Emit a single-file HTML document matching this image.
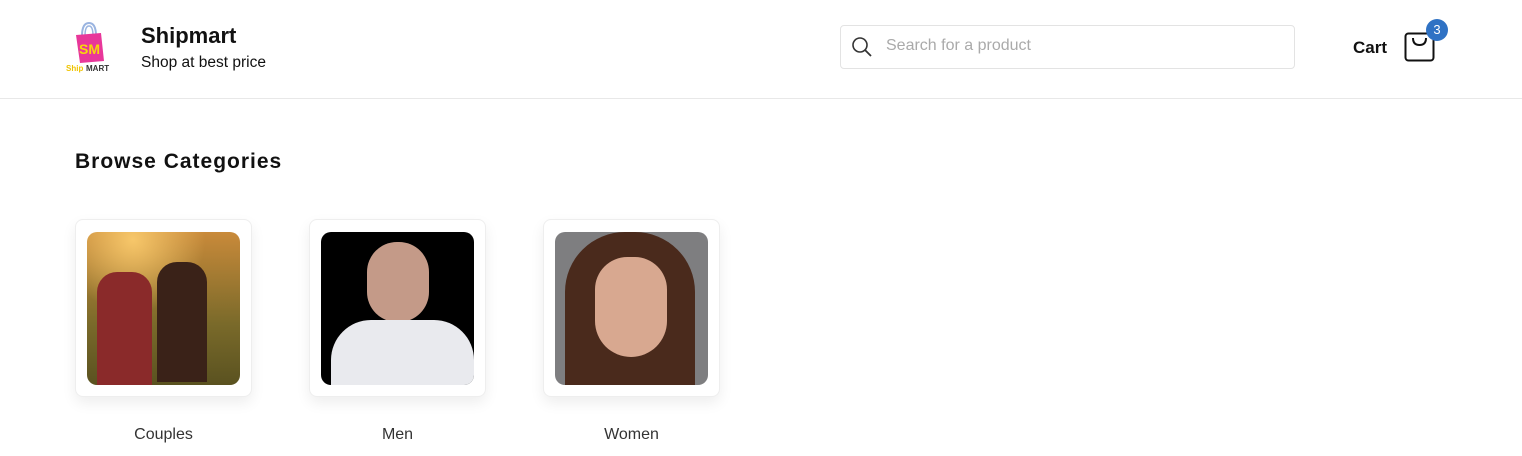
<!DOCTYPE html>
<html><head><style>
*{box-sizing:border-box;margin:0;padding:0}
body{width:1522px;height:456px;background:#fff;font-family:"Liberation Sans",Arial,sans-serif;position:relative;overflow:hidden;color:#111}
.hdr{position:absolute;left:0;top:0;width:1522px;height:99px;border-bottom:1px solid #e8e8e8}
.abs{position:absolute}
.card{position:absolute;top:219px;width:177px;height:178px;border:1px solid #eee;border-radius:8px;background:#fff;box-shadow:0 6px 14px rgba(0,0,0,0.07)}
.img{position:absolute;left:11px;top:12px;width:153px;height:153px;border-radius:10px;overflow:hidden}
.lbl{position:absolute;top:426px;width:177px;text-align:center;font-size:16px;color:#333}
</style></head><body>
<div class="hdr">
 <svg class="abs" style="left:64px;top:20px" width="50" height="54" viewBox="0 0 50 54">
  <path d="M18 16 Q18 3 25 3 Q32 3 32 16" fill="none" stroke="#9ab4e0" stroke-width="2"/>
  <path d="M21 16 Q21 6 25 6 Q29 6 29 16" fill="none" stroke="#9ab4e0" stroke-width="1.5"/>
  <path d="M12 15 L37 13 L40 41 L16 43 Z" fill="#e8379a"/>
  <text x="15" y="34" font-size="14" font-weight="bold" fill="#f5d90a" font-family="Liberation Sans">SM</text>
  <text x="2" y="51" font-size="8" font-weight="bold" fill="#f0c400" font-family="Liberation Sans">Ship</text>
  <text x="22" y="51" font-size="8" font-weight="bold" fill="#333" font-family="Liberation Sans">MART</text>
 </svg>
 <div class="abs" style="left:141px;top:23px;font-size:22px;font-weight:bold">Shipmart</div>
 <div class="abs" style="left:141px;top:54px;font-size:15.5px">Shop at best price</div>
 <div class="abs" style="left:840px;top:25px;width:455px;height:44px;border:1px solid #e3e3e3;border-radius:4px"></div>
 <svg class="abs" style="left:851px;top:36px" width="22" height="22" viewBox="0 0 22 22"><circle cx="9" cy="9" r="7" fill="none" stroke="#333" stroke-width="1.6"/><path d="M14 14 L20 20" stroke="#333" stroke-width="1.8"/></svg>
 <div class="abs" style="left:886px;top:37px;font-size:16px;color:#aaa">Search for a product</div>
 <div class="abs" style="left:1353px;top:38px;font-size:17px;font-weight:bold">Cart</div>
 <svg class="abs" style="left:1404px;top:32px" width="32" height="30" viewBox="0 0 32 30"><rect x="1.5" y="1.5" width="28" height="27" rx="3" fill="none" stroke="#111" stroke-width="2"/><path d="M9 6 Q9 13 15.5 13 Q22 13 22 6" fill="none" stroke="#111" stroke-width="2"/></svg>
 <div class="abs" style="left:1426px;top:19px;width:22px;height:22px;border-radius:50%;background:#2f72c4;color:#fff;font-size:13px;text-align:center;line-height:22px">3</div>
</div>
<div class="abs" style="left:75px;top:150px;font-size:21px;font-weight:bold;letter-spacing:1px">Browse Categories</div>
<div class="card" style="left:75px"><div class="img" style="background:radial-gradient(circle at 30% 5%,#f7c76a,transparent 40%),linear-gradient(180deg,#c98a3a,#7a6a2a 60%,#5a5220)"><div style="position:absolute;left:10px;top:40px;width:55px;height:113px;background:#8a2a2a;border-radius:20px 20px 0 0"></div><div style="position:absolute;left:70px;top:30px;width:50px;height:120px;background:#3a2218;border-radius:20px 20px 0 0"></div></div></div>
<div class="card" style="left:309px"><div class="img" style="background:#000"><div style="position:absolute;left:46px;top:10px;width:62px;height:80px;background:#c49a88;border-radius:30px"></div><div style="position:absolute;left:10px;top:88px;width:143px;height:70px;background:#e9eaee;border-radius:40px 40px 0 0"></div></div></div>
<div class="card" style="left:543px"><div class="img" style="background:#7e7e80"><div style="position:absolute;left:10px;top:0;width:130px;height:153px;background:#4a2a1c;border-radius:60px 60px 0 0"></div><div style="position:absolute;left:40px;top:25px;width:72px;height:100px;background:#d8a890;border-radius:36px 36px 40px 40px"></div></div></div>
<div class="lbl" style="left:75px">Couples</div>
<div class="lbl" style="left:309px">Men</div>
<div class="lbl" style="left:543px">Women</div>
</body></html>
